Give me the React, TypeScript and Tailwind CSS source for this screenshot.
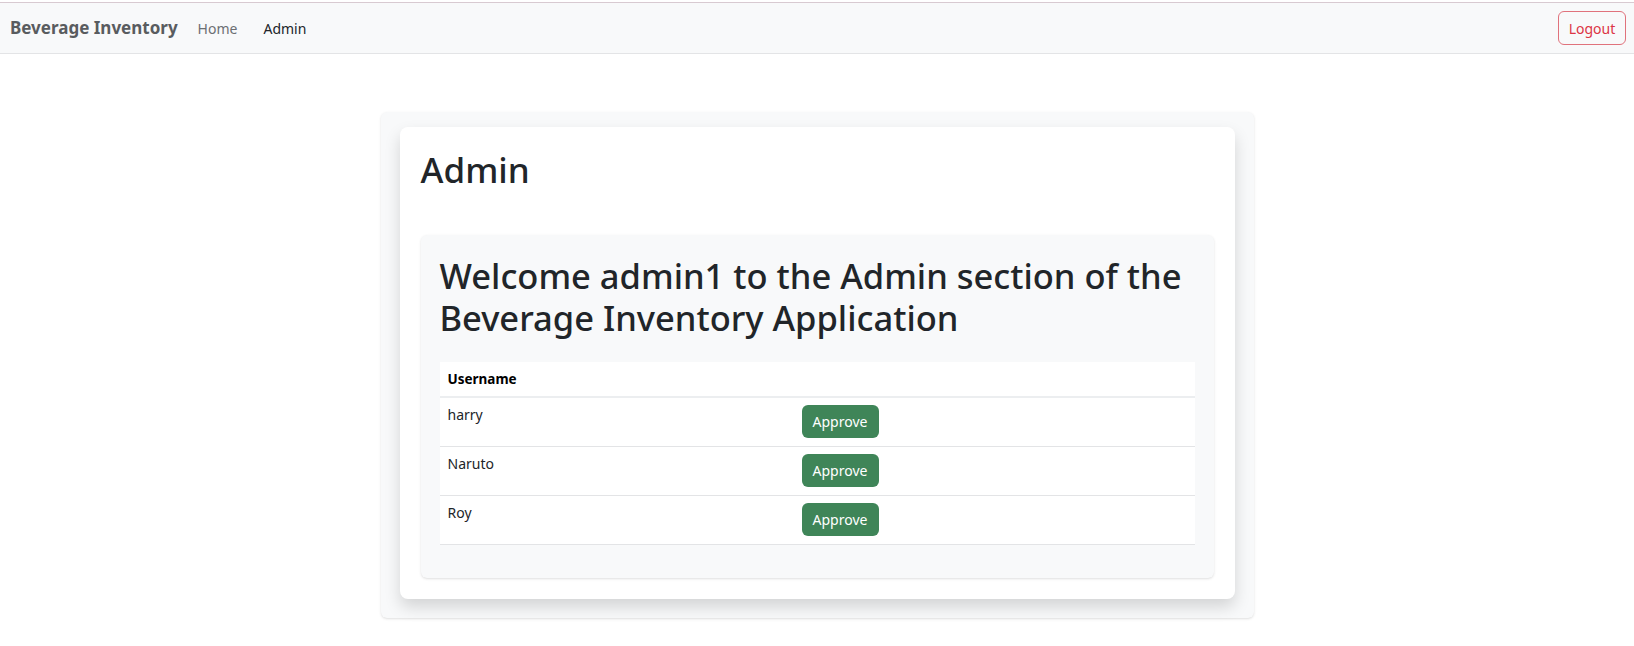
const users = ["harry", "Naruto", "Roy"];

function Navbar() {
  return (
    <nav className="mt-[2px] flex h-[52px] items-center justify-between border-t border-b border-t-[#d8cad1] border-b-[#e3e4e6] bg-[#f8f9fa] pl-[10px] pr-[8px]">
      <div className="flex items-center">
        <span className="text-[17px] font-bold text-[#595c5f]">Beverage Inventory</span>
        <a className="ml-[20px] text-[14px] text-[#6c6f73]">Home</a>
        <a className="ml-[26px] text-[14px] text-[#212529]">Admin</a>
      </div>
      <button className="h-[34px] w-[68px] rounded-md border border-[#e0727c] text-[14px] text-[#dc3545]">
        Logout
      </button>
    </nav>
  );
}

export default function App() {
  return (
    <div className="min-h-screen bg-white font-['Segoe_UI','Noto_Sans',sans-serif] text-[#212529]">
      <Navbar />
      <main className="flex justify-center pt-[58px]">
        <div className="w-[873px] rounded-md bg-[#f8f9fa] px-[19px] pt-[15px] pb-[19px] shadow-sm">
          <div className="rounded-lg bg-white px-[21px] pt-[22px] pb-[21px] shadow-[0_8px_16px_rgba(0,0,0,0.15)]">
            <h1 className="text-[35px] leading-[42px] font-medium">Admin</h1>
            <div className="mt-[44px] rounded-md bg-[#f8f9fa] px-[19px] pt-[20px] pb-[33px] shadow-sm">
              <h2 className="text-[34.5px] leading-[42px] font-medium">
                Welcome admin1 to the Admin section of the Beverage Inventory Application
              </h2>
              <table className="mt-[23px] w-full bg-white text-[14px]">
                <thead>
                  <tr className="border-b-2 border-[#eceef0]">
                    <th className="h-[35px] w-[354px] px-[8px] text-left text-[13.5px] font-bold text-black">Username</th>
                    <th></th>
                  </tr>
                </thead>
                <tbody>
                  {users.map((u) => (
                    <tr key={u} className="border-b border-[#e3e4e6]">
                      <td className="h-[49px] px-[8px] pt-[6px] align-top text-[#212529]">{u}</td>
                      <td className="px-[8px] align-middle">
                        <button className="h-[33px] w-[77px] rounded-md bg-[#3f8558] text-[14px] text-white">
                          Approve
                        </button>
                      </td>
                    </tr>
                  ))}
                </tbody>
              </table>
            </div>
          </div>
        </div>
      </main>
    </div>
  );
}
